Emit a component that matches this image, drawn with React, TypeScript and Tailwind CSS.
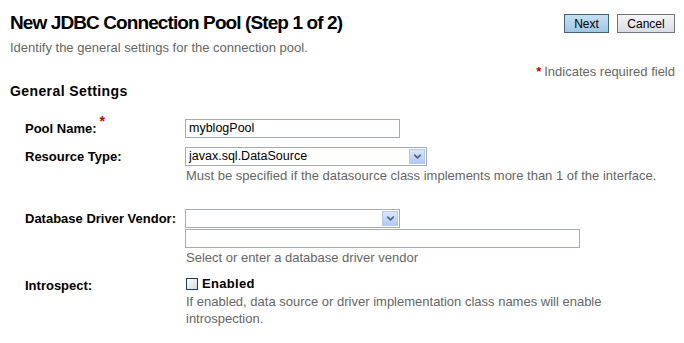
import { ChevronDown } from "lucide-react";

function SelectBox({ value, width }: { value: string; width: string }) {
  return (
    <div className={`flex h-[19px] items-center border border-[#a5acb5] bg-white ${width}`}>
      <span className="flex-1 pl-[3px] text-[12.5px] leading-none text-black">{value}</span>
      <span className="mr-[1px] flex h-[15px] w-[16px] items-center justify-center border border-[#b7c8f0] bg-gradient-to-b from-[#dce6fc] to-[#b4c8f5]">
        <ChevronDown className="h-[11px] w-[11px] text-[#4d6185]" strokeWidth={3.5} />
      </span>
    </div>
  );
}

function Row({
  label,
  required,
  children,
  className,
}: {
  label: string;
  required?: boolean;
  children: React.ReactNode;
  className?: string;
}) {
  return (
    <div className={`flex ${className ?? ""}`}>
      <div className="w-[185px] shrink-0 whitespace-nowrap pl-[25px] pt-[2px] text-[13px] font-bold leading-[15px] text-black">
        {label}
        {required && <sup className="ml-[3px] text-[14px] text-[#c00000]">*</sup>}
      </div>
      <div className="flex flex-col">{children}</div>
    </div>
  );
}

export default function App() {
  return (
    <div className="h-[343px] w-[684px] bg-white font-['Liberation_Sans',Arial,sans-serif]">
      <div className="flex items-start justify-between pl-[10px] pr-[9px] pt-[10px]">
        <h1 className="text-[19px] font-bold leading-[26px] tracking-[-0.9px] text-black">
          New JDBC Connection Pool (Step 1 of 2)
        </h1>
        <div className="mt-[4px] flex gap-[8px]">
          <button className="h-[19px] w-[45px] border border-[#45607d] bg-gradient-to-b from-[#c6e0f2] to-[#9fc7e6] text-[12px] leading-none text-black">
            Next
          </button>
          <button className="h-[19px] w-[58px] border border-[#6f7680] bg-gradient-to-b from-[#f4f5f7] to-[#d9dce2] text-[12px] leading-none text-black">
            Cancel
          </button>
        </div>
      </div>
      <p className="pl-[10px] pt-[5px] text-[13px] leading-[14px] text-[#666]">
        Identify the general settings for the connection pool.
      </p>
      <p className="pr-[9px] pt-[10px] text-right text-[13px] leading-[14px] text-[#666]">
        <span className="mr-[3px] align-top text-[13px] font-bold text-[#c00000]">*</span>
        Indicates required field
      </p>
      <h2 className="pl-[10px] pt-[4px] text-[14px] font-bold leading-[16px] tracking-[0.4px] text-black">
        General Settings
      </h2>

      <Row label="Pool Name:" required className="mt-[20px]">
        <div className="flex h-[19px] w-[215px] items-center border border-[#a5acb5] bg-white pl-[3px] text-[12.5px] text-black">
          myblogPool
        </div>
      </Row>

      <Row label="Resource Type:" className="mt-[9px]">
        <SelectBox value="javax.sql.DataSource" width="w-[242px]" />
        <span className="pl-[1px] pt-[2px] text-[13px] leading-[16px] text-[#666]">
          Must be specified if the datasource class implements more than 1 of the interface.
        </span>
      </Row>

      <Row label="Database Driver Vendor:" className="mt-[25px]">
        <SelectBox value="" width="w-[215px]" />
        <div className="mt-[1px] h-[19px] w-[395px] border border-[#a5acb5] bg-white" />
        <span className="pl-[1px] pt-[2px] text-[13px] leading-[16px] text-[#666]">
          Select or enter a database driver vendor
        </span>
      </Row>

      <Row label="Introspect:" className="mt-[10px]">
        <label className="flex h-[16px] items-center gap-[4px] pl-[1px] text-[13px] font-bold tracking-[0.3px] text-black">
          <span className="h-[12px] w-[12px] border border-[#1f3a5c] bg-gradient-to-br from-[#fdfdfd] to-[#d5d8dc]" />
          Enabled
        </label>
        <span className="w-[440px] pl-[1px] pt-[1px] text-[13px] leading-[17px] text-[#666]">
          If enabled, data source or driver implementation class names will enable introspection.
        </span>
      </Row>
    </div>
  );
}
